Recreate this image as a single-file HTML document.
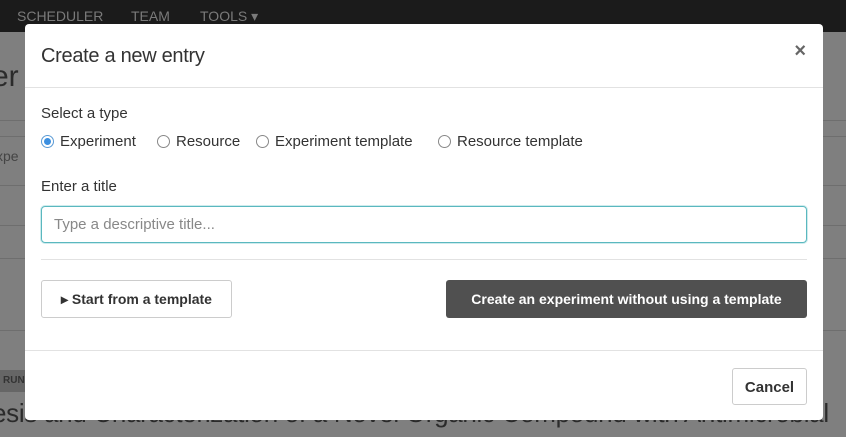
<!DOCTYPE html>
<html><head><style>
*{box-sizing:border-box;margin:0;padding:0}
html,body{width:846px;height:437px;overflow:hidden}
body{background:#7f7f7f;font-family:"Liberation Sans",sans-serif;position:relative;color:#333}
.wrap{position:absolute;left:0;top:0;width:846px;height:437px;overflow:hidden}
.nav{position:absolute;left:0;top:0;width:846px;height:32px;background:#1b1b1b;color:#7a7a7a;font-size:14px}
.nav span{position:absolute;top:8px}
.bg{position:absolute;color:#222;}
.line{position:absolute;left:0;width:846px;height:1px;background:#6e6e6e}
.modal{position:absolute;left:25px;top:24px;width:798px;height:396px;background:#fff;border-radius:4px}
.hdr{height:64px;border-bottom:1px solid #e2e2e2;position:relative}
.hdr h4{position:absolute;left:16px;top:21px;font-size:20px;font-weight:normal;color:#333;letter-spacing:-0.3px}
.close{position:absolute;right:17px;top:16px;font-size:20px;color:#666;font-weight:bold}
.lbl{position:absolute;font-size:15px;color:#333;white-space:nowrap}
.radio{position:absolute;top:111px;width:13px;height:13px;border:1px solid #888;border-radius:50%}
.input{position:absolute;left:16px;top:182px;width:766px;height:37px;border:1px solid #5ab8bf;border-radius:4px;box-shadow:0 0 0 1px #cdebed;font-size:15px;color:#888;padding:9px 12px}
.btn{position:absolute;border-radius:3px;font-size:14px;font-weight:bold;text-align:center;white-space:nowrap}
</style></head><body><div class="wrap">
<div class="nav"><span style="left:17px">SCHEDULER</span><span style="left:131px">TEAM</span><span style="left:200px">TOOLS ▾</span></div>
<div class="bg" style="left:-8px;top:60px;font-size:30px;color:#2b2b2b">er</div>
<div class="bg" style="left:-4px;top:148px;font-size:14px;color:#444">xpe</div>
<div class="line" style="top:120px"></div><div class="line" style="top:136px"></div>
<div class="line" style="top:185px"></div><div class="line" style="top:225px"></div>
<div class="line" style="top:258px"></div><div class="line" style="top:330px"></div>
<div class="bg" style="left:0;top:370px;width:26px;height:22px;background:#666;font-size:10px;color:#333;padding:5px 0 0 3px;font-weight:bold">RUN</div>
<div class="bg" style="left:-8px;top:398px;font-size:26px;color:#2b2b2b;white-space:nowrap;letter-spacing:-0.3px">esis and Characterization of a Novel Organic Compound with Antimicrobial</div>
<div class="modal">
<div class="hdr"><h4>Create a new entry</h4><div class="close">×</div></div>
<div class="lbl" style="left:16px;top:81px">Select a type</div>
<div class="radio" style="left:16px;border:1px solid #5b9bd5;"><div style="position:absolute;left:2px;top:2px;width:7px;height:7px;border-radius:50%;background:#3b8fe0"></div></div>
<div class="lbl" style="left:35px;top:109px">Experiment</div>
<div class="radio" style="left:132px"></div><div class="lbl" style="left:151px;top:109px">Resource</div>
<div class="radio" style="left:231px"></div><div class="lbl" style="left:250px;top:109px">Experiment template</div>
<div class="radio" style="left:413px"></div><div class="lbl" style="left:432px;top:109px">Resource template</div>
<div class="lbl" style="left:16px;top:154px">Enter a title</div>
<div class="input">Type a descriptive title...</div>
<div style="position:absolute;left:16px;top:235px;width:766px;height:1px;background:#e2e2e2"></div>
<div class="btn" style="left:16px;top:256px;width:191px;height:38px;border:1px solid #ccc;color:#333;padding-top:10px">▸ Start from a template</div>
<div class="btn" style="left:421px;top:256px;width:361px;height:38px;background:#505050;color:#fff;padding-top:11px">Create an experiment without using a template</div>
<div style="position:absolute;left:0;top:326px;width:798px;height:1px;background:#e2e2e2"></div>
<div class="btn" style="left:707px;top:344px;width:75px;height:37px;border:1px solid #ccc;color:#333;padding-top:10px;font-size:15px">Cancel</div>
</div>
</div></body></html>
